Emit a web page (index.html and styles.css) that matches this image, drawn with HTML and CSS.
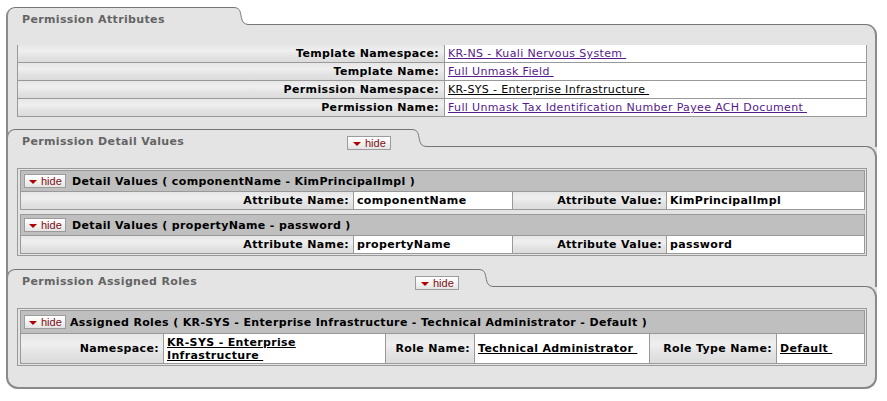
FILE: index.html
```html
<!DOCTYPE html>
<html>
<head>
<meta charset="utf-8">
<title>Permission</title>
<link rel="stylesheet" href="styles.css">
</head>
<body>
<div class="frame">

  <section class="sec sec-first">
    <div class="tabrow">
      <div class="tab tab-1"><span class="tab-title">Permission Attributes</span></div>
      <svg class="curve" viewBox="0 0 16 18" width="16" height="18"><path class="curve-fill" d="M0,0 C6,0 7,3 8,8.5 C9,14 10,17 16,17 L16,18 L0,18 Z"/><path class="curve-line" d="M0,0.5 C6,0.5 7,3 8,8.5 C9,14 10,17.5 16,17.5"/></svg>
    </div>
    <div class="body body-1">
      <table class="attr">
        <colgroup><col class="c-attr-l"><col class="c-attr-v"></colgroup>
        <tr><th>Template Namespace:</th><td><a class="lnk visited" href="#">KR-NS - Kuali Nervous System&nbsp;</a></td></tr>
        <tr><th>Template Name:</th><td><a class="lnk visited" href="#">Full Unmask Field&nbsp;</a></td></tr>
        <tr><th>Permission Namespace:</th><td><a class="lnk" href="#">KR-SYS - Enterprise Infrastructure&nbsp;</a></td></tr>
        <tr><th>Permission Name:</th><td><a class="lnk visited" href="#">Full Unmask Tax Identification Number Payee ACH Document&nbsp;</a></td></tr>
      </table>
    </div>
  </section>

  <section class="sec sec-inner">
    <div class="tabrow">
      <div class="tab tab-2"><span class="tab-title">Permission Detail Values</span><button class="hide-btn tab-btn"><span class="tri"></span>hide</button></div>
      <svg class="curve" viewBox="0 0 16 18" width="16" height="18"><path class="curve-fill" d="M0,0 C6,0 7,3 8,8.5 C9,14 10,17 16,17 L16,18 L0,18 Z"/><path class="curve-line" d="M0,0.5 C6,0.5 7,3 8,8.5 C9,14 10,17.5 16,17.5"/></svg>
    </div>
    <div class="body body-2">
      <div class="group">
        <table class="sub">
          <colgroup><col class="c-d1"><col class="c-d2"><col class="c-d3"><col class="c-d4"></colgroup>
          <tr class="subhead"><td colspan="4"><button class="hide-btn sub-btn"><span class="tri"></span>hide</button><span class="subhead-title">Detail Values ( componentName - KimPrincipalImpl )</span></td></tr>
          <tr class="row"><th>Attribute Name:</th><td>componentName</td><th>Attribute Value:</th><td class="last">KimPrincipalImpl</td></tr>
        </table>
        <table class="sub">
          <colgroup><col class="c-d1"><col class="c-d2"><col class="c-d3"><col class="c-d4"></colgroup>
          <tr class="subhead"><td colspan="4"><button class="hide-btn sub-btn"><span class="tri"></span>hide</button><span class="subhead-title">Detail Values ( propertyName - password )</span></td></tr>
          <tr class="row"><th>Attribute Name:</th><td>propertyName</td><th>Attribute Value:</th><td class="last">password</td></tr>
        </table>
      </div>
    </div>
  </section>

  <section class="sec sec-inner sec-last">
    <div class="tabrow">
      <div class="tab tab-3"><span class="tab-title">Permission Assigned Roles</span><button class="hide-btn tab-btn"><span class="tri"></span>hide</button></div>
      <svg class="curve" viewBox="0 0 16 18" width="16" height="18"><path class="curve-fill" d="M0,0 C6,0 7,3 8,8.5 C9,14 10,17 16,17 L16,18 L0,18 Z"/><path class="curve-line" d="M0,0.5 C6,0.5 7,3 8,8.5 C9,14 10,17.5 16,17.5"/></svg>
    </div>
    <div class="body body-3">
      <div class="group">
        <table class="sub roles">
          <colgroup><col class="c-r1"><col class="c-r2"><col class="c-r3"><col class="c-r4"><col class="c-r5"><col class="c-r6"></colgroup>
          <tr class="subhead"><td colspan="6"><button class="hide-btn sub-btn"><span class="tri"></span>hide</button><span class="subhead-title roles-title">Assigned Roles ( KR-SYS - Enterprise Infrastructure - Technical Administrator - Default )</span></td></tr>
          <tr class="row tall"><th>Namespace:</th><td><a class="lnk strong" href="#">KR-SYS - Enterprise Infrastructure&nbsp;</a></td><th>Role Name:</th><td><a class="lnk strong" href="#">Technical Administrator&nbsp;</a></td><th>Role Type Name:</th><td class="last"><a class="lnk strong" href="#">Default&nbsp;</a></td></tr>
        </table>
      </div>
    </div>
  </section>

</div>
</body>
</html>
```

FILE: styles.css
```css
html, body {
  margin: 0;
  padding: 0;
  background: #ffffff;
}

body {
  font-family: "DejaVu Sans", Verdana, sans-serif;
  font-size: 11px;
  letter-spacing: 0.35px;
  color: #000000;
}

.frame {
  width: 871px;
  margin: 7px 0 0 6px;
}

/* ---------- tabs ---------- */
.tabrow {
  display: flex;
  height: 18px;
  margin-bottom: -1px;
  position: relative;
  z-index: 1;
}

.tab {
  box-sizing: border-box;
  flex: none;
  height: 18px;
  background: #e4e4e4;
  border-top: 1px solid #767676;
  border-left: 2px solid #8a8a8a;
  border-top-left-radius: 9px;
  display: flex;
  align-items: flex-end;
  padding-left: 14px;
}

.tab-1 { width: 227px; }
.tab-2 { width: 405px; }
.tab-3 { width: 472px; }

.tab-title {
  font-weight: bold;
  color: #646464;
  line-height: 13px;
  margin-bottom: -1px;
  white-space: nowrap;
}

.curve {
  display: block;
  flex: none;
  width: 16px;
  height: 18px;
}

.curve-fill { fill: #e4e4e4; }
.curve-line { fill: none; stroke: #767676; stroke-width: 1; }

/* ---------- bodies ---------- */
.body {
  background: #e4e4e4;
  border-top: 1px solid #767676;
  border-left: 2px solid #8a8a8a;
  border-right: 2px solid #8a8a8a;
  border-top-right-radius: 11px;
  padding: 20px 8px 12px 9px;
}

.body-2 { padding-top: 21px; padding-bottom: 13px; }

.sec-inner { background: #e4e4e4; }

.sec-inner .tabrow {
  border-left: 2px solid #8a8a8a;
  border-right: 2px solid #8a8a8a;
}

.sec-inner .tab { margin-left: -2px; }

.sec-last { border-radius: 0 0 12px 12px; }

.sec-last .body {
  border-bottom: 2px solid #8a8a8a;
  border-radius: 0 11px 12px 12px;
  padding-top: 21px;
  padding-bottom: 21px;
}

/* ---------- tables ---------- */
table {
  border-collapse: separate;
  border-spacing: 0;
  table-layout: fixed;
}

th {
  font-weight: bold;
  text-align: right;
  white-space: nowrap;
  background: linear-gradient(to bottom, #e6e6e6 0%, #efefef 35%, #e2e2e2 70%, #dcdcdc 100%);
  padding: 0 4px;
}

td {
  background: #ffffff;
  text-align: left;
}

.attr {
  width: 850px;
  border-left: 1px solid #999;
  border-right: 1px solid #999;
}

.c-attr-l { width: 427px; }
.c-attr-v { width: 421px; }

.attr th,
.attr td {
  box-sizing: border-box;
  height: 18px;
  border-bottom: 1px solid #999;
  line-height: 14px;
  padding-top: 1px;
  padding-bottom: 0;
}

.attr th { border-right: 1px solid #999; padding-right: 5px; }
.attr td { padding-left: 3px; }

.lnk {
  color: #000000;
  text-decoration: underline;
}

.lnk.visited { color: #551a8b; }
.lnk.strong { font-weight: bold; color: #000; }

/* group of subtables */
.group {
  border: 1px solid #999;
  padding: 1px 2px;
  display: flex;
  flex-direction: column;
  gap: 4px;
}

.sub {
  width: 845px;
  border: 1px solid #999;
}

.c-d1 { width: 333px; }
.c-d2 { width: 159px; }
.c-d3 { width: 154px; }
.c-d4 { width: 197px; }

.c-r1 { width: 143px; }
.c-r2 { width: 222px; }
.c-r3 { width: 89px; }
.c-r4 { width: 175px; }
.c-r5 { width: 127px; }
.c-r6 { width: 87px; }

.subhead td {
  background: #bfbfbf;
  height: 21px;
  box-sizing: border-box;
  border-bottom: 1px solid #999;
  padding: 0 0 0 3px;
  white-space: nowrap;
}

.roles .subhead td { height: 23px; }

.subhead-title {
  font-weight: bold;
  margin-left: 6px;
  vertical-align: middle;
}

.roles-title { margin-left: 4px; }

.row th,
.row td {
  height: 17px;
  line-height: 14px;
  font-weight: bold;
  padding-top: 0;
  padding-bottom: 0;
  vertical-align: middle;
}

.row th { border-right: 1px solid #999; padding-right: 4px; }
.row td { border-right: 1px solid #999; padding-left: 3px; padding-right: 2px; }
.row td.last { border-right: none; }

.row.tall th,
.row.tall td { height: 29px; line-height: 13px; }

/* hide buttons */
.hide-btn {
  box-sizing: border-box;
  width: 44px;
  height: 14px;
  border: 1px solid #9c9c9c;
  border-radius: 0;
  background: linear-gradient(to bottom, #ffffff 0%, #f3f3f3 50%, #e4e4e4 100%);
  font-family: "Liberation Sans", Arial, sans-serif;
  font-size: 11px;
  letter-spacing: 0;
  line-height: 12px;
  color: #7b1010;
  padding: 0 0 0 5px;
  margin: 0;
  display: inline-flex;
  align-items: center;
  vertical-align: middle;
}

.sub-btn { width: 42px; padding-left: 4px; }

.tab-btn {
  margin-left: auto;
  margin-right: 20px;
  margin-bottom: -3px;
  flex: none;
}

.tab-3 .tab-btn { margin-right: 19px; }

.tri {
  width: 0;
  height: 0;
  border-left: 4px solid transparent;
  border-right: 4px solid transparent;
  border-top: 4px solid #b00000;
  margin-right: 4px;
  margin-top: 1px;
}
```
